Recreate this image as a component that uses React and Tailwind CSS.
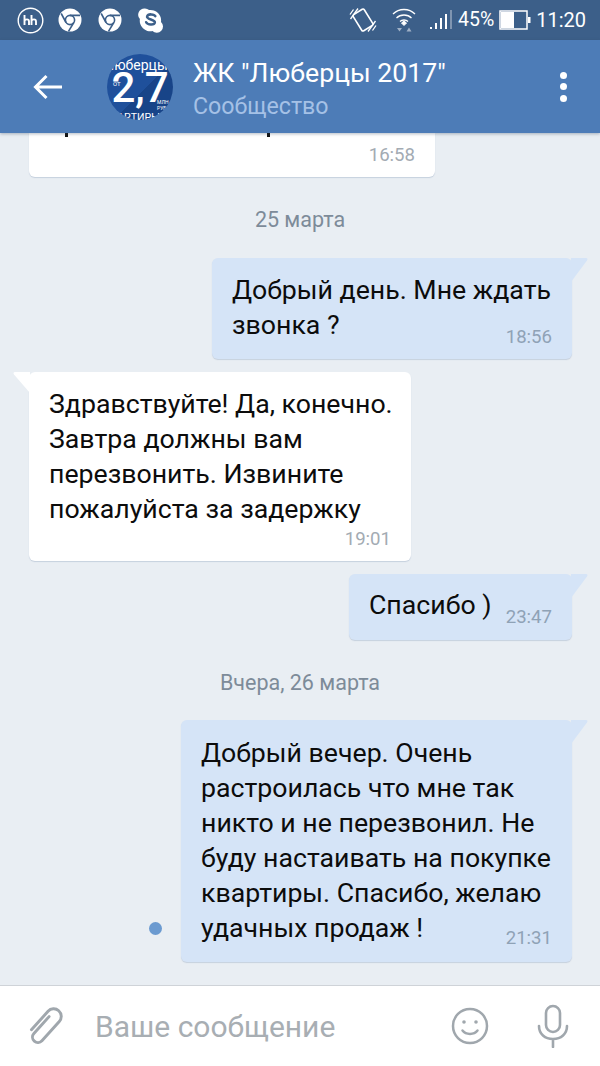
const font = { fontFamily: "Roboto, sans-serif" };

function ChromeIcon() {
  return (
    <svg width="24" height="24" viewBox="0 0 24 24" fill="none">
      <circle cx="12" cy="12" r="11.5" fill="#fff" />
      <circle cx="12" cy="12" r="4.6" fill="#fff" stroke="#3c5f89" strokeWidth="1.6" />
      <path d="M12 7.400h10M8 14.500 3.200 5.500M15.800 14.500 10.500 23.400" stroke="#3c5f89" strokeWidth="1.6" />
    </svg>
  );
}

function StatusBar() {
  return (
    <div className="h-[40px] bg-[#3c5f89] flex items-center pl-[17px] pr-[14px] text-white shrink-0">
      <svg width="27" height="27" viewBox="0 0 27 27" fill="none" className="mr-[14px]">
        <circle cx="13.5" cy="13.5" r="12.3" stroke="#fff" strokeWidth="1.4" />
        <path d="M7.500 8v10M7.500 14c.5-2 4.500-2.500 4.500.5V18M14.500 8v10M14.500 14c.5-2 4.500-2.500 4.500.5V18" stroke="#fff" strokeWidth="1.9" />
      </svg>
      <div className="mr-[16px]"><ChromeIcon /></div>
      <div className="mr-[15px]"><ChromeIcon /></div>
      <svg width="27" height="27" viewBox="0 0 28 28" fill="none">
        <path d="M8 1.500a6.500 6.500 0 0 1 4.500 1.600 11 11 0 0 1 12.400 12.400A6.500 6.500 0 0 1 16 25a11 11 0 0 1-13-12.600A6.500 6.500 0 0 1 8 1.500Z" fill="#fff" />
        <path d="M19 9.500c-1-2-7.500-3-8.500.3-1 3.600 8.500 2.700 8 6.300-.5 3-7.500 2.600-9-.3" stroke="#3c5f89" strokeWidth="2.6" strokeLinecap="round" />
      </svg>
      <div className="flex-1" />
      <svg width="28" height="28" viewBox="0 0 28 28" fill="none" stroke="#fff" className="mr-[14px]">
        <rect x="7.500" y="4.500" width="13" height="19" rx="1.500" transform="rotate(-32 14 14)" strokeWidth="1.6" />
        <path d="M1.500 13 9 2.500M4.500 3.500 1 8.500M19 25.500 26.500 15M23.500 24.500 27 19.500" strokeWidth="1.3" />
      </svg>
      <svg width="26" height="28" viewBox="0 0 26 28" fill="none" stroke="#fff" className="mr-[13px]">
        <path d="M2 8c6-6 16-6 22 0M5.500 12c4-4 11-4 15 0M9 15.500c2-2 6-2 8 0" strokeWidth="1.3" />
        <path d="m10.500 17 2.500-2 2.500 2-2.500 2.500Z" fill="#fff" />
        <path d="M6 22h5l-2.500 3.500ZM18 21.500l2.500 4h-5Z" fill="#9fb0c6" stroke="none" />
      </svg>
      <svg width="22" height="24" viewBox="0 0 22 24" fill="#fff" className="mr-[6px]">
        <rect x="0" y="19" width="2" height="2" />
        <rect x="5" y="15" width="2" height="6" />
        <rect x="10" y="10" width="2" height="11" />
        <rect x="15" y="6" width="2" height="15" />
        <rect x="20" y="2" width="2" height="19" fill="#7f95b1" />
      </svg>
      <span className="text-[19.5px] leading-none mr-[5px]">45%</span>
      <svg width="32" height="20" viewBox="0 0 32 20" fill="none" className="mr-[5px]">
        <rect x="1" y="1" width="27" height="18" stroke="#fff" strokeWidth="1.5" />
        <rect x="2" y="2" width="13" height="16" fill="#fff" />
        <rect x="29" y="7" width="2.5" height="6" fill="#fff" />
      </svg>
      <span className="text-[20px] leading-none">11:20</span>
    </div>
  );
}

function Avatar() {
  return (
    <div className="relative w-[66px] h-[66px] rounded-full bg-[linear-gradient(135deg,#1f509b_55%,#184488_55%)] overflow-hidden shrink-0 flex flex-col items-center text-white">
      <span className="text-[14px] leading-none mt-[4px] mr-[8px] whitespace-nowrap">Люберцы</span>
      <span className="text-[42px] leading-[38px] font-medium -mt-[3px]">2,7</span>
      <span className="text-[10.5px] leading-none mt-[6px] mr-[16px] whitespace-nowrap">КВАРТИРЫ</span>
      <span className="absolute left-[6px] top-[27px] text-[6px] leading-none">ОТ</span>
      <span className="absolute left-[50px] top-[45px] text-[5px] leading-[6px]">МЛН<br />РУБ</span>
    </div>
  );
}

function Header() {
  return (
    <div className="relative z-10 h-[93px] bg-[#4d7cb7] flex items-center shadow-[0_1px_3px_rgba(40,60,90,0.35)] shrink-0">
      <svg width="30" height="26" viewBox="0 0 30 26" fill="none" stroke="#fff" strokeWidth="3" className="ml-[33px] mr-[44px] shrink-0">
        <path d="M29 13H3M13.500 2 2.500 13l11 11" />
      </svg>
      <Avatar />
      <div className="ml-[20px] pt-[4px] flex flex-col">
        <span className="text-[26.7px] leading-[34px] text-white whitespace-nowrap">ЖК "Люберцы 2017"</span>
        <span className="text-[23.2px] leading-[32px] text-[#a5c1e6]">Сообщество</span>
      </div>
      <div className="ml-auto mr-[33px] flex flex-col gap-[4.5px]">
        <span className="w-[7px] h-[7px] rounded-full bg-white" />
        <span className="w-[7px] h-[7px] rounded-full bg-white" />
        <span className="w-[7px] h-[7px] rounded-full bg-white" />
      </div>
    </div>
  );
}

function TailLeft() {
  return (
    <svg width="17" height="21" viewBox="0 0 17 21" className="absolute -left-[16px] top-0">
      <path d="M17 0H2C.5 0 0 1 1 2.500L17 21Z" fill="#fff" />
    </svg>
  );
}

function TailRight() {
  return (
    <svg width="17" height="24" viewBox="0 0 17 24" className="absolute -right-[16px] top-0">
      <path d="M0 0h15c1.500 0 2 1 1 2.500L0 24Z" fill="#d5e4f7" />
    </svg>
  );
}

function Bubble({ lines, time, out, width, textClass = "", timeClass }) {
  return (
    <div
      className={`relative rounded-[6px] pt-[15px] pl-[20px] pr-[20px] pb-[12px] flex flex-col shadow-[0_1px_1px_rgba(90,120,160,0.25)] ${
        out ? "bg-[#d5e4f7]" : "bg-white"
      } ${width}`}
    >
      {out ? <TailRight /> : <TailLeft />}
      <div className={`text-[26.7px] leading-[35px] text-[#0c0c0c] whitespace-nowrap ${textClass}`}>
        {lines.map((l) => (
          <div key={l}>{l}</div>
        ))}
      </div>
      <span className={`self-end text-[18.6px] leading-[20px] ${out ? "text-[#8fa2b6]" : "text-[#a3abb3]"} ${timeClass}`}>
        {time}
      </span>
    </div>
  );
}

function DateLabel({ children, className }) {
  return <div className={`text-center text-[21.5px] leading-[24px] text-[#7d8b99] ${className}`}>{children}</div>;
}

export default function App() {
  return (
    <div className="w-[600px] h-[1066px] flex flex-col overflow-hidden bg-[#e9eef3]" style={font}>
      <StatusBar />
      <Header />

      <div className="flex-1 min-h-0 overflow-hidden flex flex-col">
        {/* old message, mostly scrolled away under the header, only two descender stubs show */}
        <div className="ml-[29px] w-[406px] h-[44px] rounded-b-[6px] bg-white shadow-[0_1px_1px_rgba(90,120,160,0.25)] shrink-0 flex flex-col pr-[20px]">
          <div className="flex h-[5px] pl-[36px] gap-[199px]">
            <span className="w-[3px] h-[4px] bg-[#111]" />
            <span className="w-[3px] h-[4px] bg-[#111]" />
          </div>
          <span className="self-end mt-[7px] text-[18.6px] leading-[20px] text-[#a3abb3]">16:58</span>
        </div>

        <DateLabel className="mt-[31px]">25 марта</DateLabel>

        <div className="mt-[26px] mr-[28px] self-end">
          <Bubble out width="w-[360px]" timeClass="-mt-[16px]" lines={["Добрый день. Мне ждать", "звонка ?"]} time="18:56" />
        </div>

        <div className="mt-[13px] ml-[29px] self-start">
          <Bubble width="w-[382px]" timeClass="mt-[2px]" lines={["Здравствуйте! Да, конечно.", "Завтра должны вам", "перезвонить. Извините", "пожалуйста за задержку"]} time="19:01" />
        </div>

        <div className="mt-[13px] mr-[28px] self-end">
          <div className="relative w-[223px] h-[66px] rounded-[6px] bg-[#d5e4f7] pl-[20px] pr-[20px] flex items-center justify-between shadow-[0_1px_1px_rgba(90,120,160,0.25)]">
            <TailRight />
            <span className="text-[26.7px] leading-[35px] text-[#0c0c0c] -mt-[4px]">Спасибо )</span>
            <span className="text-[18.6px] leading-[20px] text-[#8fa2b6] mt-[20px]">23:47</span>
          </div>
        </div>

        <DateLabel className="mt-[31px]">Вчера, 26 марта</DateLabel>

        <div className="mt-[25px] mr-[28px] self-end flex items-end gap-[19px]">
          <span className="w-[13px] h-[13px] rounded-full bg-[#6b9ad0] mb-[27px]" />
          <Bubble out width="w-[391px]" textClass="mt-[1px]" timeClass="-mt-[18px] mb-[2px]" lines={["Добрый вечер. Очень", "растроилась что мне так", "никто и не перезвонил. Не", "буду настаивать на покупке", "квартиры. Спасибо, желаю", "удачных продаж !"]} time="21:31" />
        </div>
      </div>

      <div className="h-[81px] shrink-0 bg-white border-t border-[#cfd3d8] flex items-center">
        <svg width="36" height="38" viewBox="0 0 36 38" fill="none" stroke="#a0a7ad" strokeWidth="2.7" strokeLinecap="round" className="ml-[27px] shrink-0">
          <path transform="translate(18 19) rotate(42) scale(1.08) translate(-10 -22)" d="M3 33V10a7 7 0 0 1 14 0v24a5 5 0 0 1-10 0V13" />
        </svg>
        <span className="ml-[32px] mt-[2px] text-[30px] leading-none text-[#a8aeb3]">Ваше сообщение</span>
        <svg width="38" height="38" viewBox="0 0 38 38" fill="none" stroke="#a0a7ad" strokeWidth="2.5" className="ml-auto shrink-0">
          <circle cx="19" cy="19" r="17" />
          <circle cx="13" cy="15" r="1.8" fill="#a0a7ad" stroke="none" />
          <circle cx="25" cy="15" r="1.8" fill="#a0a7ad" stroke="none" />
          <path d="M11.500 23.500c3.500 4.500 11.500 4.500 15 0" strokeLinecap="round" />
        </svg>
        <svg width="32" height="44" viewBox="0 0 32 44" fill="none" stroke="#a0a7ad" strokeWidth="2.6" className="ml-[48px] mr-[31px] shrink-0">
          <rect x="9" y="2" width="14" height="26" rx="7" />
          <path d="M2 22c0 8 6 13 14 13s14-5 14-13M16 35v8" strokeLinecap="round" />
        </svg>
      </div>
    </div>
  );
}
